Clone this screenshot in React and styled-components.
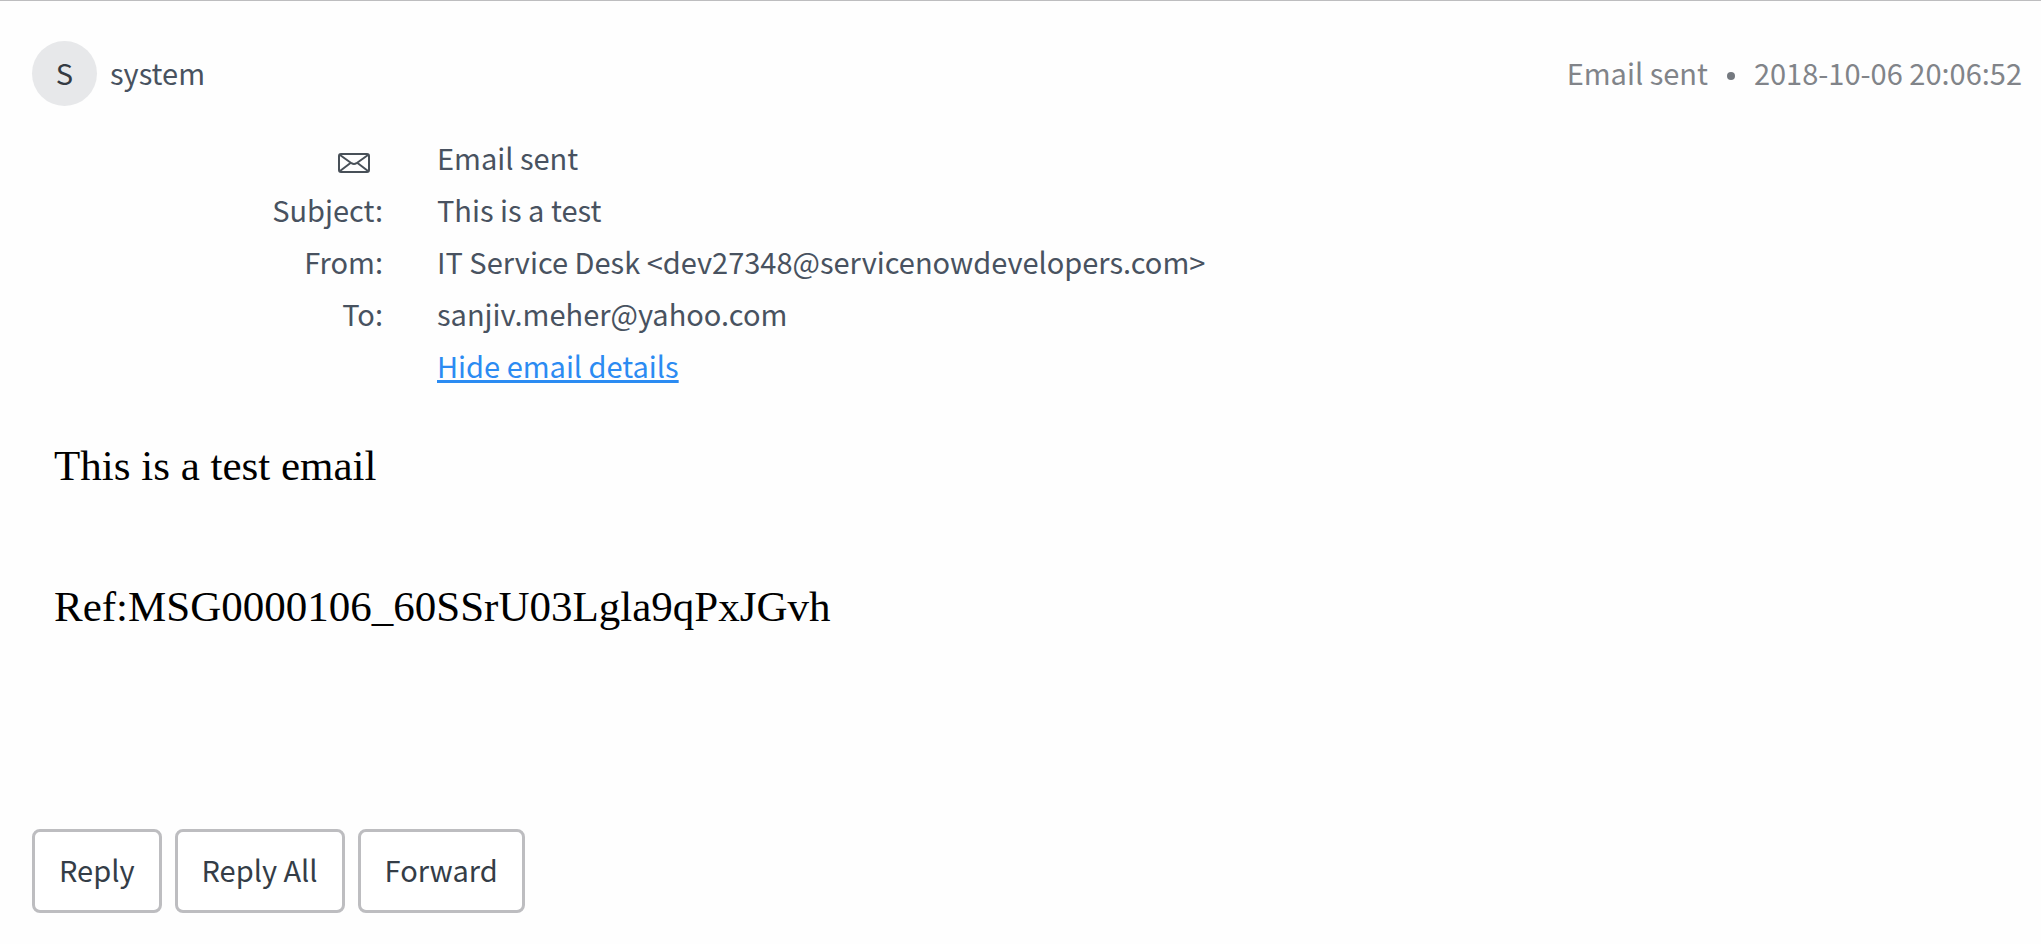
import React, { useState } from 'react';
import styled, { createGlobalStyle } from 'styled-components';

const GlobalStyle = createGlobalStyle`
  * {
    box-sizing: border-box;
  }
  body {
    margin: 0;
    background-color: #fefefe;
  }
`;

// One email entry of the activity stream
const Entry = styled.article`
  border-top: 1px solid #bdbdbf;
  padding: 40px 19px 31px 32px;
  font-family: 'Noto Sans CJK SC', 'Open Sans', sans-serif;
  font-size: 29px;
  line-height: 52px;
  color: #485260;
`;

const Header = styled.header`
  display: flex;
  align-items: center;
  justify-content: space-between;
`;

const Author = styled.div`
  display: flex;
  align-items: center;
  gap: 13px;
`;

const Avatar = styled.span`
  display: flex;
  align-items: center;
  justify-content: center;
  width: 65px;
  height: 65px;
  padding-bottom: 4px;
  border-radius: 50%;
  background-color: #e7e8ea;
  color: #343a42;
`;

const Name = styled.span`
  padding-bottom: 4px;
`;

const Meta = styled.div`
  display: flex;
  align-items: center;
  gap: 19px;
  padding-bottom: 4px;
  color: #818489;
`;

const Dot = styled.span`
  width: 8px;
  height: 8px;
  margin-top: 8px;
  border-radius: 50%;
  background-color: #74797f;
`;

const Details = styled.dl`
  display: grid;
  grid-template-columns: 351px 1fr;
  column-gap: 54px;
  margin: 25px 0 0;
  dt {
    text-align: right;
  }
  dd {
    margin: 0;
    overflow-wrap: anywhere;
  }
`;

const TypeIcon = styled.dt`
  display: flex;
  align-items: center;
  justify-content: flex-end;
  padding: 12px 13px 0 0;
`;

const Toggle = styled.a`
  grid-column: 2;
  justify-self: start;
  color: #2b8bf2;
  text-decoration: underline;
  text-decoration-thickness: 3px;
  text-underline-offset: 2px;
`;

// The mail body keeps its own plain styling
const Message = styled.div`
  padding: 50px 22px 0;
  min-height: 438px;
  font-family: 'Liberation Serif', serif;
  font-size: 43px;
  line-height: 50px;
  color: #000;
  p {
    margin: 0 0 91px;
    overflow-wrap: anywhere;
  }
`;

const Actions = styled.footer`
  display: flex;
  flex-wrap: wrap;
  gap: 13px;
`;

const ActionButton = styled.button`
  height: 84px;
  padding: 0 24px 4px;
  border: 3px solid #bdbdc0;
  border-radius: 8px;
  background-color: #fff;
  font: inherit;
  color: #343d47;
  cursor: pointer;
`;

const fields = [
  { label: 'Subject:', value: 'This is a test' },
  {
    label: 'From:',
    value: 'IT Service Desk <dev27348@servicenowdevelopers.com>',
  },
  { label: 'To:', value: 'sanjiv.meher@yahoo.com' },
];

const actions = ['Reply', 'Reply All', 'Forward'];

function Envelope() {
  return (
    <svg
      width="32"
      height="20"
      viewBox="0 0 32 20"
      fill="none"
      stroke="#485058"
      strokeWidth="2"
      strokeLinejoin="round"
      aria-hidden="true"
    >
      <rect x="1" y="1" width="30" height="18" rx="2" />
      <path d="M2 2l11.5 8.2q2.5 1.6 5 0L30 2M2 18l10.5-8M30 18l-10.5-8" />
    </svg>
  );
}

export default function App() {
  const [open, setOpen] = useState(true);

  const toggleDetails = (event) => {
    event.preventDefault();
    setOpen(!open);
  };

  return (
    <>
      <GlobalStyle />
      <Entry>
        <Header>
          <Author>
            <Avatar>S</Avatar>
            <Name>system</Name>
          </Author>
          <Meta>
            <span>Email sent</span>
            <Dot />
            <time dateTime="2018-10-06T20:06:52">2018-10-06 20:06:52</time>
          </Meta>
        </Header>
        <Details>
          <TypeIcon>
            <Envelope />
          </TypeIcon>
          <dd>Email sent</dd>
          {open &&
            fields.map((field) => (
              <React.Fragment key={field.label}>
                <dt>{field.label}</dt>
                <dd>{field.value}</dd>
              </React.Fragment>
            ))}
          <Toggle href="#details" onClick={toggleDetails}>
            {open ? 'Hide email details' : 'Show email details'}
          </Toggle>
        </Details>
        <Message>
          <p>This is a test email</p>
          <p>Ref:MSG0000106_60SSrU03Lgla9qPxJGvh</p>
        </Message>
        <Actions>
          {actions.map((action) => (
            <ActionButton key={action} type="button">
              {action}
            </ActionButton>
          ))}
        </Actions>
      </Entry>
    </>
  );
}
